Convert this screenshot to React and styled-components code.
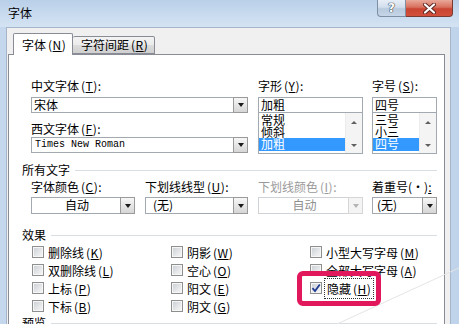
import React from 'react';
import styled, { createGlobalStyle } from 'styled-components';

const Global = createGlobalStyle`
  html, body { margin: 0; padding: 0; background: #fff; }
  body {
    font-family: "Noto Sans CJK SC", "Noto Sans", sans-serif;
    font-size: 12px;
    color: #000;
  }
  * { box-sizing: border-box; }
`;

const Window = styled.div`
  position: relative;
  width: 459px;
  height: 324px;
  overflow: hidden;
  display: flex;
  flex-direction: column;
  background: linear-gradient(to right, #c4d7ed, #d3e2f2 50%, #bfd3ea);
`;

const TitleBar = styled.div`
  height: 27px;
  flex: none;
  display: flex;
  justify-content: space-between;
  align-items: flex-start;
  background: linear-gradient(to bottom, #b9cfe8 0%, #c6d9ee 45%, #d4e3f3 100%);
`;

const TitleText = styled.div`
  margin: 6px 0 0 8px;
  line-height: 14px;
  font-size: 12px;
`;

const Caption = styled.div`
  display: flex;
  margin-right: 6px;
`;

const CapButton = styled.div`
  width: ${(p) => p.$w}px;
  height: 17px;
  display: flex;
  align-items: center;
  justify-content: center;
  border: 1px solid ${(p) => (p.$close ? '#7a3a32' : '#7e8ea3')};
  border-top: none;
  border-left: ${(p) => (p.$close ? 'none' : undefined)};
  border-radius: ${(p) => (p.$close ? '0 0 4px 0' : '0 0 0 4px')};
  background: ${(p) =>
    p.$close
      ? 'linear-gradient(to bottom, #e9a99b 0%, #d8705e 45%, #c94532 55%, #d2503b 100%)'
      : 'linear-gradient(to bottom, #e7eef7 0%, #d2deec 45%, #b9cade 55%, #c6d5e7 100%)'};
`;

const HelpGlyph = styled.span`
  font-family: "DejaVu Sans", sans-serif;
  font-weight: bold;
  font-size: 12px;
  line-height: 12px;
  color: #fff;
  text-shadow: 0 0 1px #36404c, 0 0 1px #36404c, 0 0 1px #36404c;
`;

const Frame = styled.div`
  flex: 1;
  display: flex;
  padding: 0 8px 0 6px;
  min-height: 0;
`;

const Body = styled.div`
  flex: 1;
  display: flex;
  flex-direction: column;
  background: #f0f0f0;
  border: 1px solid #a5b6ca;
  border-bottom: none;
  padding: 5px 5px 0 1px;
  min-height: 0;
`;

const Tabs = styled.div`
  position: relative;
  z-index: 1;
  height: 22px;
  margin-bottom: -1px;
  padding-left: 5px;
  display: flex;
  align-items: flex-end;
`;

const Tab = styled.div`
  width: ${(p) => (p.$active ? 60 : 82)}px;
  height: ${(p) => (p.$active ? 22 : 18)}px;
  margin-bottom: ${(p) => (p.$active ? 0 : 1)}px;
  padding-left: ${(p) => (p.$active ? 8 : 8)}px;
  display: flex;
  align-items: center;
  border: 1px solid #898c95;
  border-bottom: ${(p) => (p.$active ? 'none' : '1px solid #898c95')};
  border-left: ${(p) => (p.$active ? '1px solid #898c95' : 'none')};
  border-radius: 2px 2px 0 0;
  background: ${(p) =>
    p.$active ? '#fff' : 'linear-gradient(to bottom, #f3f3f3 0%, #ebebeb 50%, #dddddd 51%, #cfcfcf 100%)'};
  white-space: nowrap;
  line-height: 14px;
`;

const Key = styled.span`
  margin-left: 2px;
  letter-spacing: 0.5px;
  & u { text-decoration: underline; text-underline-offset: 1px; }
`;

const Panel = styled.div`
  flex: 1;
  background: #fff;
  border: 1px solid #898c95;
  border-bottom: none;
  padding: 0 7px 0 13px;
  display: flex;
  flex-direction: column;
`;

const Row = styled.div`
  display: flex;
  align-items: flex-start;
  margin-top: ${(p) => p.$mt || 0}px;
  margin-left: 9px;
`;

const Col = styled.div`
  width: ${(p) => p.$w}px;
  margin-left: ${(p) => p.$ml || 0}px;
  flex: none;
  display: flex;
  flex-direction: column;
`;

const Label = styled.div`
  height: 14px;
  line-height: 14px;
  white-space: nowrap;
  margin-top: ${(p) => p.$mt || 0}px;
  color: ${(p) => (p.$disabled ? '#9a9a9a' : '#000')};
`;

const Combo = styled.div`
  height: ${(p) => p.$h || 16}px;
  margin-top: ${(p) => p.$mt || 0}px;
  display: flex;
  border: 1px solid ${(p) => (p.$disabled ? '#cfd3d8' : '#a3a9b1')};
  background: #fff;
`;

const ComboText = styled.div`
  flex: 1;
  min-width: 0;
  padding-left: ${(p) => (p.$pad != null ? p.$pad : 2)}px;
  text-align: ${(p) => (p.$center ? 'center' : 'left')};
  line-height: 14px;
  white-space: nowrap;
  overflow: hidden;
  color: ${(p) => (p.$disabled ? '#8f8f8f' : '#000')};
`;

const MonoText = styled(ComboText)`
  font-family: "Liberation Mono", "DejaVu Sans Mono", monospace;
  font-size: 10px;
  padding-left: 3px;
`;

const DropBtn = styled.div`
  width: 15px;
  flex: none;
  display: flex;
  align-items: center;
  justify-content: center;
  border: 1px solid ${(p) => (p.$disabled ? '#d6d6d6' : '#9a9a9a')};
  margin: -1px -1px -1px 0;
  background: ${(p) =>
    p.$disabled ? '#f4f4f4' : 'linear-gradient(to bottom, #f7f7f7 0%, #e6e6e6 50%, #d6d6d6 100%)'};
  &::after {
    content: '';
    width: 0;
    height: 0;
    border-left: 3.5px solid transparent;
    border-right: 3.5px solid transparent;
    border-top: 4px solid ${(p) => (p.$disabled ? '#b4b4b4' : '#1a1a1a')};
  }
`;

const List = styled.div`
  height: 41px;
  display: flex;
  border: 1px solid #a3a9b1;
  border-top: none;
  overflow: hidden;
`;

const Items = styled.div`
  flex: 1;
  min-width: 0;
  padding-top: 1px;
  display: flex;
  flex-direction: column;
`;

const Item = styled.div`
  height: 12px;
  line-height: 12px;
  padding-left: 2px;
  white-space: nowrap;
  background: ${(p) => (p.$sel ? '#3399ff' : 'transparent')};
  color: ${(p) => (p.$sel ? '#fff' : '#000')};
  ${(p) => (p.$sel ? 'height: 13px;' : '')}
`;

const ScrollBar = styled.div`
  width: 17px;
  flex: none;
  background: #f4f4f4;
  border-left: 1px solid #ececec;
  display: flex;
  flex-direction: column;
  justify-content: space-between;
  align-items: center;
  padding: 8px 0 6px;
`;

const Arrow = styled.div`
  width: 0;
  height: 0;
  border-left: 3px solid transparent;
  border-right: 3px solid transparent;
  ${(p) => (p.$down ? 'border-top: 3px solid #606060;' : 'border-bottom: 3px solid #606060;')}
`;

const Section = styled.div`
  display: flex;
  align-items: center;
  height: 14px;
  line-height: 14px;
  margin-top: ${(p) => p.$mt || 0}px;
  white-space: nowrap;
  &::after {
    content: '';
    flex: 1;
    height: 1px;
    margin-left: 5px;
    background: #d9dee3;
  }
`;

const Checks = styled.div`
  display: grid;
  grid-template-columns: 139px 139px 1fr;
  grid-template-rows: repeat(4, 18px);
  grid-auto-flow: column;
  margin: 1px 0 0 10px;
`;

const CheckItem = styled.div`
  display: flex;
  align-items: center;
  white-space: nowrap;
`;

const Box = styled.div`
  width: 12px;
  height: 12px;
  flex: none;
  margin-right: 4px;
  border: 1px solid #8e8f8f;
  background: linear-gradient(135deg, #c9cdd2 0%, #e6e8ea 60%, #f7f7f7 100%);
  box-shadow: inset 0 0 0 1px #f6f6f6;
  display: flex;
  align-items: center;
  justify-content: center;
`;

const FocusLabel = styled.span`
  outline: 1px dotted #333;
  outline-offset: 1px;
  padding: 0 1px;
`;

const Highlight = styled.div`
  position: absolute;
  left: 297px;
  top: 271px;
  width: 84px;
  height: 35px;
  border: 5px solid #e2185c;
  border-radius: 6px;
  z-index: 5;
`;

const Overlay = styled.svg`
  position: absolute;
  left: 0;
  top: 0;
  z-index: 4;
  pointer-events: none;
`;

const K = ({ k }) => (
  <Key>
    (<u>{k}</u>)
  </Key>
);

const Check = ({ label, k, checked, focus }) => (
  <CheckItem>
    <Box>
      {checked && (
        <svg width="10" height="10" viewBox="0 0 10 10">
          <path d="M1.5 5.2 L4 8 L8.8 1.5" fill="none" stroke="#1f3c92" strokeWidth="1.8" />
        </svg>
      )}
    </Box>
    {focus ? (
      <FocusLabel>
        {label}
        <K k={k} />
      </FocusLabel>
    ) : (
      <span>
        {label}
        <K k={k} />
      </span>
    )}
  </CheckItem>
);

export default function App() {
  return (
    <>
      <Global />
      <Window>
        <TitleBar>
          <TitleText>字体</TitleText>
          <Caption>
            <CapButton $w={29}>
              <HelpGlyph>?</HelpGlyph>
            </CapButton>
            <CapButton $w={47} $close>
              <svg width="13" height="11" viewBox="0 0 13 11">
                <path d="M2 1.5 L11 9.5 M11 1.5 L2 9.5" stroke="#5b2520" strokeWidth="4" strokeLinecap="round" />
                <path d="M2 1.5 L11 9.5 M11 1.5 L2 9.5" stroke="#fff" strokeWidth="2.2" strokeLinecap="round" />
              </svg>
            </CapButton>
          </Caption>
        </TitleBar>
        <Frame>
          <Body>
            <Tabs>
              <Tab $active>
                字体<K k="N" />
              </Tab>
              <Tab>
                字符间距<K k="R" />
              </Tab>
            </Tabs>
            <Panel>
              <Row $mt={24}>
                <Col $w={217}>
                  <Label>
                    中文字体<K k="T" />:
                  </Label>
                  <Combo $mt={4}>
                    <ComboText>宋体</ComboText>
                    <DropBtn />
                  </Combo>
                  <Label $mt={9}>
                    西文字体<K k="F" />:
                  </Label>
                  <Combo $mt={1}>
                    <MonoText>Times New Roman</MonoText>
                    <DropBtn />
                  </Combo>
                </Col>
                <Col $w={105} $ml={10}>
                  <Label>
                    字形<K k="Y" />:
                  </Label>
                  <Combo $mt={4}>
                    <ComboText>加粗</ComboText>
                  </Combo>
                  <List>
                    <Items>
                      <Item>常规</Item>
                      <Item>倾斜</Item>
                      <Item $sel>加粗</Item>
                    </Items>
                    <ScrollBar>
                      <Arrow />
                      <Arrow $down />
                    </ScrollBar>
                  </List>
                </Col>
                <Col $w={65} $ml={9}>
                  <Label>
                    字号<K k="S" />:
                  </Label>
                  <Combo $mt={4}>
                    <ComboText>四号</ComboText>
                  </Combo>
                  <List>
                    <Items>
                      <Item>三号</Item>
                      <Item>小三</Item>
                      <Item $sel>四号</Item>
                    </Items>
                    <ScrollBar>
                      <Arrow />
                      <Arrow $down />
                    </ScrollBar>
                  </List>
                </Col>
              </Row>

              <Section $mt={9}>所有文字</Section>

              <Row $mt={3}>
                <Col $w={104}>
                  <Label>
                    字体颜色<K k="C" />:
                  </Label>
                  <Combo $mt={3} $h={17}>
                    <ComboText $center>自动</ComboText>
                    <DropBtn />
                  </Combo>
                </Col>
                <Col $w={103} $ml={10}>
                  <Label>
                    下划线线型<K k="U" />:
                  </Label>
                  <Combo $mt={3} $h={17}>
                    <ComboText $pad={7}>(无)</ComboText>
                    <DropBtn />
                  </Combo>
                </Col>
                <Col $w={105} $ml={10}>
                  <Label $disabled>
                    下划线颜色<K k="I" />:
                  </Label>
                  <Combo $mt={3} $h={17} $disabled>
                    <ComboText $center $disabled>自动</ComboText>
                    <DropBtn $disabled />
                  </Combo>
                </Col>
                <Col $w={65} $ml={9}>
                  <Label>
                    着重号(·)<u>:</u>
                  </Label>
                  <Combo $mt={3} $h={17}>
                    <ComboText $pad={4}>(无)</ComboText>
                    <DropBtn />
                  </Combo>
                </Col>
              </Row>

              <Section $mt={14}>效果</Section>

              <Checks>
                <Check label="删除线" k="K" />
                <Check label="双删除线" k="L" />
                <Check label="上标" k="P" />
                <Check label="下标" k="B" />
                <Check label="阴影" k="W" />
                <Check label="空心" k="O" />
                <Check label="阳文" k="E" />
                <Check label="阴文" k="G" />
                <Check label="小型大写字母" k="M" />
                <Check label="全部大写字母" k="A" />
                <Check label="隐藏" k="H" checked focus />
              </Checks>

              <Section $mt={1}>预览</Section>
            </Panel>
          </Body>
        </Frame>
        <Overlay width="459" height="324" viewBox="0 0 459 324">
          <line x1="337" y1="324" x2="459" y2="268" stroke="#e4e4e4" strokeWidth="1" />
        </Overlay>
        <Highlight />
      </Window>
    </>
  );
}
